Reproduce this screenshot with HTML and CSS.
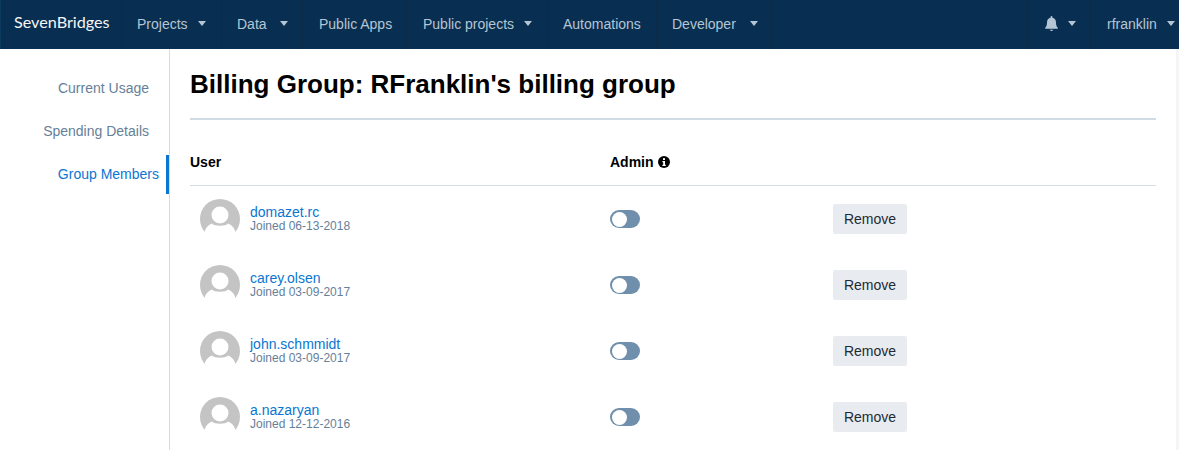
FILE: index.html
```html
<!DOCTYPE html>
<html lang="en">
<head>
<meta charset="utf-8">
<title>Billing Group</title>
<link rel="stylesheet" href="styles.css">
</head>
<body>
<header class="nav">
  <a class="brand">SevenBridges</a>
  <a class="nav-item w-projects">Projects<span class="caret"></span></a>
  <a class="nav-item w-data">Data<span class="caret"></span></a>
  <a class="nav-item w-apps">Public Apps</a>
  <a class="nav-item w-public">Public projects<span class="caret"></span></a>
  <a class="nav-item w-auto">Automations</a>
  <a class="nav-item w-dev">Developer<span class="caret"></span></a>
  <span class="nav-fill"></span>
  <a class="nav-item w-bell">
    <svg class="bell" viewBox="0 0 14 16"><path d="M7 0a1 1 0 0 1 1 1v.8c2.300.4 3.800 2.300 3.800 4.600 0 3.900 1 5.200 2 6.200v1H.2v-1c1-1 2-2.300 2-6.200C2.200 4.100 3.700 2.200 6 1.800V1a1 1 0 0 1 1-1zM5 14.800h4A2 2 0 0 1 7 16a2 2 0 0 1-2-1.200z"/></svg>
    <span class="caret"></span></a>
  <a class="nav-item w-user">rfranklin<span class="caret"></span></a>
</header>
<div class="page">
  <aside class="side">
    <a class="side-link">Current Usage</a>
    <a class="side-link">Spending Details</a>
    <a class="side-link active">Group Members</a>
  </aside>
  <main class="main">
    <h1 class="title">Billing Group: RFranklin's billing group</h1>
    <div class="row head">
      <div class="col-user">User</div>
      <div class="col-admin">Admin
        <svg class="info" viewBox="0 0 12 12"><circle cx="6" cy="6" r="6"/><rect class="info-mark" x="5" y="2.200" width="2" height="1.800"/><path class="info-mark" d="M4.400 5h2.600v3.800h.8V10H4.400V8.800h.8V6.200h-.8z"/></svg>
      </div>
    </div>
    <div class="row member">
      <div class="col-user">
        <svg class="avatar" viewBox="0 0 40 40"><use href="#avatar"/></svg>
        <div class="who"><a class="name">domazet.rc</a><span class="joined">Joined 06-13-2018</span></div>
      </div>
      <div class="col-admin"><span class="toggle"><span class="knob"></span></span></div>
      <button class="remove">Remove</button>
    </div>
    <div class="row member">
      <div class="col-user">
        <svg class="avatar" viewBox="0 0 40 40"><use href="#avatar"/></svg>
        <div class="who"><a class="name">carey.olsen</a><span class="joined">Joined 03-09-2017</span></div>
      </div>
      <div class="col-admin"><span class="toggle"><span class="knob"></span></span></div>
      <button class="remove">Remove</button>
    </div>
    <div class="row member">
      <div class="col-user">
        <svg class="avatar" viewBox="0 0 40 40"><use href="#avatar"/></svg>
        <div class="who"><a class="name">john.schmmidt</a><span class="joined">Joined 03-09-2017</span></div>
      </div>
      <div class="col-admin"><span class="toggle"><span class="knob"></span></span></div>
      <button class="remove">Remove</button>
    </div>
    <div class="row member">
      <div class="col-user">
        <svg class="avatar" viewBox="0 0 40 40"><use href="#avatar"/></svg>
        <div class="who"><a class="name">a.nazaryan</a><span class="joined">Joined 12-12-2016</span></div>
      </div>
      <div class="col-admin"><span class="toggle"><span class="knob"></span></span></div>
      <button class="remove">Remove</button>
    </div>
  </main>
</div>
<svg class="defs" width="0" height="0"><defs>
  <g id="avatar">
    <circle cx="20" cy="20" r="20" fill="#c4c4c4"/>
    <circle cx="20" cy="16" r="8.500" fill="#fff"/>
    <path d="M4 40c0-9 2-13 8-15.500 2 3 14 3 16 0 6 2.500 8 6.500 8 15.500z" fill="#fff"/>
  </g>
</defs></svg>
</body>
</html>
```
FILE: styles.css
```css
* { box-sizing: border-box; }
html, body { margin: 0; height: 450px; overflow: hidden; background: #fff; }
body { font-family: "Liberation Sans", Arial, sans-serif; font-size: 14px; color: #000; }
.defs { position: absolute; }

.nav { display: flex; height: 49px; background: #082f51; color: #b6c5d3; border-left: 1px solid #0c3a5e; }
.brand { width: 121px; flex: none; padding: 0 0 0 13px; line-height: 44px; font-family: "Lato", sans-serif; font-size: 16.200px; color: #f4f6f8; border-right: 1px solid #0d2a47; }
.nav-item { flex: none; display: flex; align-items: center; padding: 0 0 2px 15px; border-right: 1px solid #0d2a47; }
.w-projects { width: 100px; }
.w-data { width: 81px; }
.w-apps { width: 104px; padding-left: 16px; }
.w-public { width: 141px; padding-left: 16px; }
.w-auto { width: 109px; }
.w-dev { width: 116px; }
.w-bell { width: 63px; padding-left: 16px; border-left: 1px solid #0d2a47; }
.w-user { width: 88px; padding-left: 16px; border-right: 0; }
.nav-fill { flex: 1; }
.caret { width: 0; height: 0; margin-left: 10px; border-left: 4.500px solid transparent; border-right: 4.500px solid transparent; border-top: 5px solid #b6c5d3; }
.w-data .caret { margin-left: 13px; }
.w-dev .caret { margin-left: 14px; }
.w-bell .caret { margin-left: 10px; }
.bell { width: 13px; height: 15px; fill: #b6c5d3; }

.page { display: flex; height: 401px; border-right: 3px solid #f4f5f6; }
.side { width: 170px; flex: none; display: flex; flex-direction: column; padding-top: 18px; border-right: 1px solid #d3dde6; }
.side-link { height: 43px; padding-right: 20px; line-height: 43px; text-align: right; color: #668099; }
.side-link.active { height: 39px; margin-top: 2px; line-height: 39px; color: #0a76d1; border-right: 3px solid #0a76d1; padding-right: 7px; }

.main { flex: 1; padding: 0 20px; }
.title { margin: 0; height: 71px; padding-top: 19px; font-size: 26px; line-height: 32px; font-weight: 700; border-bottom: 2px solid #cfdbe5; }
.row { display: flex; align-items: center; }
.head { height: 66px; padding-top: 18px; border-bottom: 1px solid #d3dde6; font-weight: 700; }
.member { height: 66px; }
.col-user { width: 420px; flex: none; display: flex; align-items: center; }
.member .col-user { padding-left: 10px; }
.col-admin { width: 223px; flex: none; display: flex; align-items: center; }
.info { width: 12px; height: 12px; margin-left: 4px; fill: #000; }
.info-mark { fill: #fff; }
.avatar { width: 40px; height: 40px; flex: none; }
.who { margin: -1px 0 0 10px; display: flex; flex-direction: column; }
.name { color: #0a76d1; line-height: 14px; }
.joined { padding-top: 1px; color: #668099; font-size: 12px; line-height: 13px; }
.toggle { display: block; width: 30px; height: 18px; padding: 1.500px 2px; border-radius: 9px; background: #6f8fac; }
.knob { display: block; width: 15px; height: 15px; border-radius: 50%; background: #fff; }
.remove { width: 74px; height: 30px; padding: 0; border: 0; border-radius: 2px; background: #e8ecf0; color: #1f2933; font: 14px "Liberation Sans", Arial, sans-serif; }
```
